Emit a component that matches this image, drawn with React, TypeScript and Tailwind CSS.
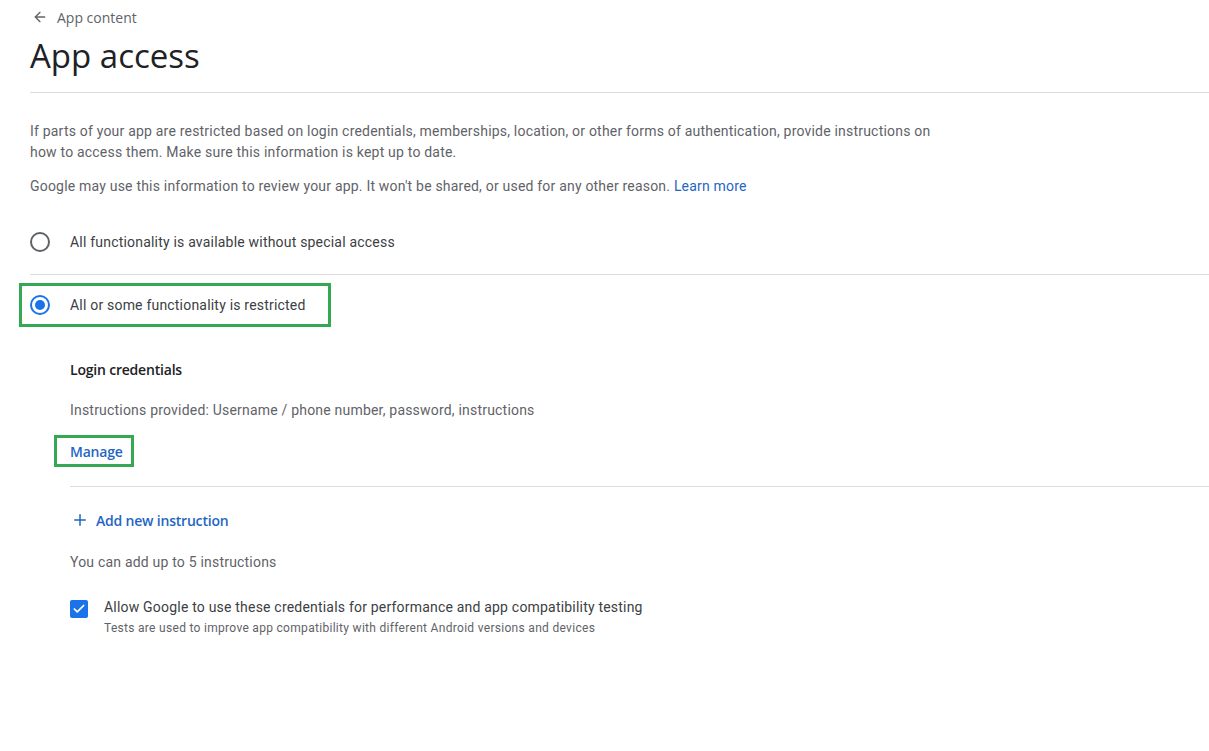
import { ArrowLeft, Plus, Check } from "lucide-react";

const body = { fontFamily: "Roboto, 'Liberation Sans', sans-serif" };
const heading = { fontFamily: "'Open Sans', 'Liberation Sans', sans-serif" };

function Radio({ checked }: { checked?: boolean }) {
  return (
    <span
      className={`flex h-[20px] w-[20px] shrink-0 items-center justify-center rounded-full border-2 ${
        checked ? "border-[#1a73e8]" : "border-[#5f6368]"
      }`}
    >
      {checked && <span className="h-[10px] w-[10px] rounded-full bg-[#1a73e8]" />}
    </span>
  );
}

export default function App() {
  return (
    <div
      className="min-h-screen bg-white pl-[30px] pt-[7px] text-[14px] tracking-[0.2px] text-[#5f6368]"
      style={body}
    >
      <div className="flex h-[20px] items-center gap-[9px] pl-[2px]">
        <ArrowLeft className="h-[16px] w-[16px] text-[#5f6368]" strokeWidth={2} />
        <span className="text-[14px] tracking-normal text-[#5f6368]" style={heading}>App content</span>
      </div>

      <h1 className="mt-[9px] h-[40px] text-[33px] leading-[40px] tracking-normal text-[#202124]" style={heading}>
        App access
      </h1>

      <div className="mt-[16px] h-px bg-[#dadce0]" />

      <p className="mt-[28px] max-w-[910px] leading-[21px]">
        If parts of your app are restricted based on login credentials, memberships, location, or other forms of
        authentication, provide instructions on how to access them. Make sure this information is kept up to date.
      </p>
      <p className="mt-[13px] leading-[21px]">
        Google may use this information to review your app. It won't be shared, or used for any other reason.{" "}
        <span className="text-[#1f66c1]">Learn more</span>
      </p>

      <div className="mt-[13px] flex h-[64px] items-center gap-[20px]">
        <Radio />
        <span className="text-[#3c4043]">All functionality is available without special access</span>
      </div>
      <div className="h-px bg-[#dadce0]" />

      <div className="-ml-[11px] mt-[8px] inline-flex h-[44px] items-center gap-[20px] border-[3px] border-[#34a853] pl-[8px] pr-[22px]">
        <Radio checked />
        <span className="text-[#3c4043]">All or some functionality is restricted</span>
      </div>

      <div className="pl-[40px]">
        <div
          className="mt-[33px] h-[20px] font-semibold leading-[20px] tracking-[-0.2px] text-[#202124]"
          style={heading}
        >
          Login credentials
        </div>
        <div className="mt-[20px] h-[20px] leading-[20px]">
          Instructions provided: Username / phone number, password, instructions
        </div>
        <div
          className="-ml-[16px] mt-[15px] inline-flex h-[32px] items-center border-[3px] border-[#34a853] pl-[13px] pr-[8px] font-semibold tracking-[-0.2px] text-[#1f66c1]"
          style={heading}
        >
          Manage
        </div>
        <div className="mt-[19px] h-px bg-[#dadce0]" />

        <div
          className="mt-[23px] flex h-[20px] items-center gap-[7px] pl-[1px] font-semibold tracking-[-0.2px] text-[#1f66c1]"
          style={heading}
        >
          <Plus className="h-[18px] w-[18px]" strokeWidth={2} />
          <span>Add new instruction</span>
        </div>

        <div className="mt-[22px] h-[20px] leading-[20px]">You can add up to 5 instructions</div>

        <div className="mt-[25px] flex gap-[16px]">
          <span className="mt-[3px] flex h-[18px] w-[18px] shrink-0 items-center justify-center rounded-[2px] bg-[#1a73e8]">
            <Check className="h-[14px] w-[14px] text-white" strokeWidth={3} />
          </span>
          <div>
            <div className="h-[20px] leading-[20px] text-[#3c4043]">
              Allow Google to use these credentials for performance and app compatibility testing
            </div>
            <div className="mt-[3px] text-[12px] leading-[16px] tracking-[0.3px]">
              Tests are used to improve app compatibility with different Android versions and devices
            </div>
          </div>
        </div>
      </div>
    </div>
  );
}
